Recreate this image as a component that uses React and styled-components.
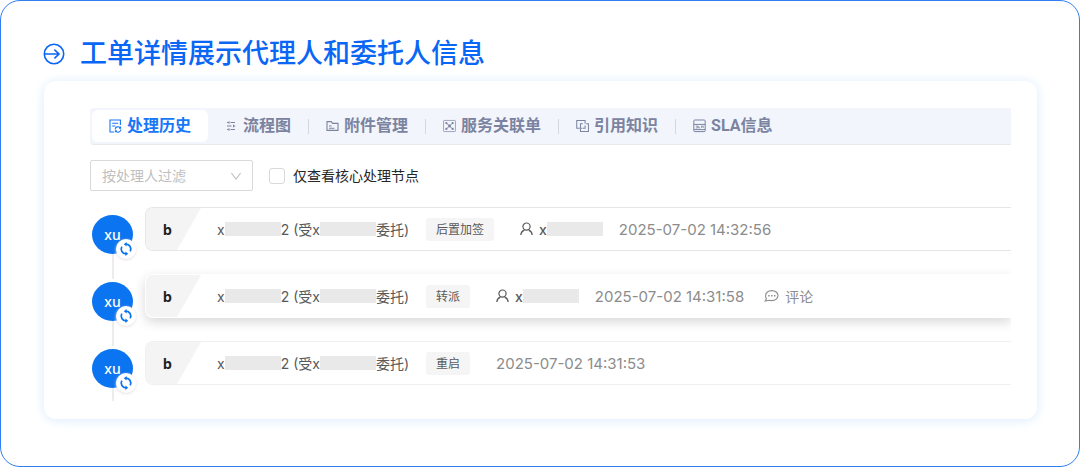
import React, { useState } from 'react';
import styled, { createGlobalStyle } from 'styled-components';

const tabs = [
    { key: "history", label: "处理历史", icon: HistoryIcon },
    { key: "flow", label: "流程图", icon: FlowIcon },
    { key: "files", label: "附件管理", icon: FolderIcon },
    { key: "service", label: "服务关联单", icon: RelationIcon },
    { key: "quote", label: "引用知识", icon: QuoteIcon },
    { key: "sla", label: "SLA信息", icon: SlaIcon },
]

const records = [
    { id: 1, action: "后置加签", hasTarget: true, time: "2025-07-02 14:32:56" },
    { id: 2, action: "转派", hasTarget: true, time: "2025-07-02 14:31:58", active: true },
    { id: 3, action: "重启", time: "2025-07-02 14:31:53" },
]

const App = () => {
    const [current, setCurrent] = useState("history")
    const [coreOnly, setCoreOnly] = useState(false)

    return (
        <Frame>
            <GlobalStyle />
            <Header>
                <ArrowIcon />
                <h1>工单详情展示代理人和委托人信息</h1>
            </Header>

            <Panel>
                <Tabs>
                    {tabs.map(({ key, label, icon: Icon }) => (
                        <Tab key={key} $active={key === current} onClick={() => setCurrent(key)}>
                            <Icon />
                            {label}
                        </Tab>
                    ))}
                </Tabs>

                <Toolbar>
                    <SelectBox>
                        <select aria-label="按处理人过滤" defaultValue="">
                            <option value="">按处理人过滤</option>
                        </select>
                        <ChevronIcon />
                    </SelectBox>
                    <CheckLabel>
                        <input type="checkbox" checked={coreOnly} onChange={(e) => setCoreOnly(e.target.checked)} />
                        仅查看核心处理节点
                    </CheckLabel>
                </Toolbar>

                <Timeline>
                    {records.map((record) => (
                        <Record key={record.id}>
                            <Rail>
                                <Avatar>
                                    xu
                                    <Badge><SyncIcon /></Badge>
                                </Avatar>
                                <Line />
                            </Rail>
                            <Card $active={record.active}>
                                <Node>b</Node>
                                <Person>x<Mask />2 (受x<Mask />委托)</Person>
                                <Tag>{record.action}</Tag>
                                {record.hasTarget && (
                                    <Target><UserIcon />x<Mask /></Target>
                                )}
                                <Time $near={record.hasTarget}>{record.time}</Time>
                                {record.active && (
                                    <Comment><CommentIcon />评论</Comment>
                                )}
                            </Card>
                        </Record>
                    ))}
                </Timeline>
            </Panel>
        </Frame>
    );
}

export default App;

function ArrowIcon() {
    return (
        <svg width="22" height="22" viewBox="0 0 22 22" fill="none" stroke="currentColor" strokeWidth="1.6">
            <circle cx="11" cy="11" r="9.7" />
            <path d="M1.5 11H16M11.4 6.6L16 11l-4.6 4.4" />
        </svg>
    )
}

function HistoryIcon() {
    return (
        <svg width="13" height="14" viewBox="0 0 13 14" fill="none" stroke="currentColor" strokeWidth="1.1">
            <path d="M5 13H1V1h10.4v5M3.2 4.2h6M3.2 7h3.2" />
            <path d="M6.2 10.4a2.7 2.7 0 0 1 4.9-1.5M11.8 10.4a2.7 2.7 0 0 1-4.9 1.7M11.6 7.6v1.6h-1.5M6.4 13.2v-1.5h1.4" />
        </svg>
    )
}

function FlowIcon() {
    return (
        <svg width="13" height="14" viewBox="0 0 13 14" fill="none" stroke="currentColor" strokeWidth="1">
            <path d="M2 3.5h1.6M5.5 3.5H10M2 7h4.5M8.5 7h1.8M2 10.5h1.6M5.5 10.5H10" />
            <path d="M4 2.2v2.6M8.5 5.7v2.6M4 9.2v2.6" />
        </svg>
    )
}

function FolderIcon() {
    return (
        <svg width="13" height="14" viewBox="0 0 13 14" fill="none" stroke="currentColor" strokeWidth="1.1">
            <path d="M1 2.6h4.2l1.4 1.8H12v7H1zM3 7h2.6M3 9.2h5.4" />
        </svg>
    )
}

function RelationIcon() {
    return (
        <svg width="14" height="14" viewBox="0 0 14 14" fill="none" stroke="currentColor" strokeWidth="1">
            <rect x=".6" y="1" width="12.8" height="12" rx=".8" opacity=".75" />
            <path d="M3.6 3.8l6.8 6.4M10.4 3.8l-6.8 6.4" />
            <g fill="currentColor" stroke="none">
                <circle cx="3.6" cy="3.8" r="1.2" />
                <circle cx="10.4" cy="3.8" r="1.2" />
                <circle cx="3.6" cy="10.2" r="1.2" />
                <circle cx="10.4" cy="10.2" r="1.2" />
                <circle cx="7" cy="7" r="1.5" />
            </g>
        </svg>
    )
}

function QuoteIcon() {
    return (
        <svg width="14" height="14" viewBox="0 0 14 14" fill="none" stroke="currentColor" strokeWidth="1.1">
            <path d="M4 9.4H.8V1h9v3.6M4.8 10v3h8.6V4.6H11" />
            <path d="M7.4 4.6H4.8v4.8h2M7.4 9.4h2.4v-3" />
        </svg>
    )
}

function SlaIcon() {
    return (
        <svg width="13" height="14" viewBox="0 0 13 14" fill="none" stroke="currentColor" strokeWidth="1">
            <rect x=".8" y="1" width="11.4" height="11.6" rx="1" />
            <path d="M.8 5.4h11.4M.8 10.6h11.4" />
            <path d="M2.8 7h1.6v2H2.8M5.8 6.8v2.2h1.4M8.6 9V7h1.6v2" strokeWidth=".8" />
        </svg>
    )
}

function ChevronIcon() {
    return (
        <svg width="12" height="12" viewBox="0 0 12 12" fill="none" stroke="#bfbfbf" strokeWidth="1.1">
            <path d="M1.4 3l4.6 6 4.6-6" />
        </svg>
    )
}

function SyncIcon() {
    return (
        <svg width="14" height="14" viewBox="0 0 14 14" fill="none" stroke="#0b74f0" strokeWidth="1.7">
            <path d="M7 2.2A4.8 4.8 0 0 1 11.2 9.300M7 11.800A4.800 4.800 0 0 1 2.800 4.700" />
            <path d="M7.600 0v4.400L4.800 2.200zM6.400 14V9.600l2.800 2.200z" fill="#0b74f0" stroke="none" />
        </svg>
    )
}

function UserIcon() {
    return (
        <svg width="13" height="14" viewBox="0 0 13 14" fill="none" stroke="currentColor" strokeWidth="1.2">
            <circle cx="6.5" cy="4.6" r="3.6" />
            <path d="M.8 13c.2-2.6 1.7-4.2 3.5-4.9M12.2 13c-.2-2.6-1.7-4.2-3.5-4.9" />
        </svg>
    )
}

function CommentIcon() {
    return (
        <svg width="15" height="14" viewBox="0 0 15 14" fill="none" stroke="currentColor" strokeWidth="1.1">
            <path d="M7.8 1.6c3.6 0 6.2 2.2 6.2 5s-2.6 5-6.2 5c-1 0-1.9-.1-2.7-.4L1.2 12l1.2-2.2A4.5 4.5 0 0 1 1.6 6.6c0-2.8 2.6-5 6.2-5z" />
            <path d="M4.2 6.7h1.4M7.1 6.7h1.4M10 6.7h1.4" strokeWidth="1.4" />
        </svg>
    )
}

const GlobalStyle = createGlobalStyle`
    * {
        box-sizing: border-box;
    }

    body {
        margin: 0;
        background-color: #fff;
        font-family: Inter, "Noto Sans CJK SC", sans-serif;
        font-size: 14px;
    }

    svg {
        display: block;
        flex: none;
    }
`;

const Frame = styled.main`
    padding: 35px 42px 47px;
    border: 1px solid #2f7ff2;
    border-radius: 20px;
    padding-left: 43px;
`;

const Header = styled.header`
    display: flex;
    align-items: center;
    gap: 15px;
    margin-bottom: 9px;
    color: #0a66f5;

    svg {
        margin-left: -1px;
    }

    h1 {
        margin: 0;
        font-size: 27px;
        font-weight: 500;
        line-height: 36px;
    }
`;

const Panel = styled.section`
    padding: 27px 26px 23px 46px;
    border-radius: 12px;
    background-color: #fff;
    box-shadow: 0 1px 12px #d9ebfd;
`;

const Tabs = styled.nav`
    display: flex;
    padding: 2px;
    border-bottom: 1px solid #e8e9ec;
    border-radius: 4px 0 0 4px;
    background-color: #f2f5fb;
`;

const Tab = styled.button`
    display: flex;
    align-items: center;
    gap: 5px;
    height: 32px;
    padding: 0 17px;
    border: none;
    border-radius: 6px;
    background-color: ${({ $active }) => $active ? "#fff" : "transparent"};
    color: ${({ $active }) => $active ? "#1677f7" : "#7b83a0"};
    font-family: Roboto, "Noto Sans CJK SC", sans-serif;
    font-size: 16px;
    font-weight: 700;
    line-height: 24px;
    white-space: nowrap;
    cursor: pointer;

    svg {
        width: 13px;
    }

    & + &:not(:nth-child(2))::before {
        content: "";
        width: 1px;
        height: 15px;
        margin-left: -17px;
        margin-right: 12px;
        background-color: #d5d8df;
    }
`;

const Toolbar = styled.div`
    display: flex;
    align-items: center;
    gap: 16px;
    margin: 15px 0 16px;
`;

const SelectBox = styled.div`
    display: grid;
    align-items: center;
    width: 163px;

    select {
        grid-area: 1 / 1;
        height: 31px;
        padding: 0 11px;
        border: 1px solid #d9d9d9;
        border-radius: 2px;
        background-color: #fff;
        color: #bfbfbf;
        font: inherit;
        appearance: none;
    }

    svg {
        grid-area: 1 / 1;
        justify-self: end;
        margin-right: 11px;
        pointer-events: none;
    }
`;

const CheckLabel = styled.label`
    display: flex;
    align-items: center;
    gap: 8px;
    color: #262626;
    line-height: 20px;

    input {
        width: 16px;
        height: 16px;
        margin: 0;
        border: 1px solid #d9d9d9;
        border-radius: 3px;
        background-color: #fff;
        appearance: none;

        &:checked {
            border-color: #1677f7;
            background-color: #1677f7;
        }
    }
`;

const Timeline = styled.ul`
    margin: 0;
    padding: 0;
    list-style: none;
`;

const Record = styled.li`
    display: flex;
    padding-bottom: 23px;

    &:last-child {
        padding-bottom: 11px;
    }
`;

const Rail = styled.div`
    display: flex;
    flex-direction: column;
    align-items: center;
    flex: none;
    width: 41px;
    margin: 8px 12px -28px 2px;

    ${Record}:last-child & {
        margin-bottom: -16px;
    }
`;

const Avatar = styled.div`
    position: relative;
    display: flex;
    align-items: center;
    justify-content: center;
    width: 41px;
    height: 39px;
    border-radius: 50%;
    background-color: #0b74f0;
    color: #fff;
    font-family: "Noto Sans", sans-serif;
    font-weight: 500;
`;

const Badge = styled.span`
    position: absolute;
    right: -3px;
    bottom: -5px;
    display: flex;
    align-items: center;
    justify-content: center;
    width: 20px;
    height: 20px;
    border-radius: 50%;
    background-color: #fff;
    box-shadow: 0 1px 3px #eadfe0;
`;

const Line = styled.div`
    flex: 1;
    width: 2px;
    background-color: #ececec;
`;

const Card = styled.article`
    display: flex;
    align-items: center;
    flex: 1;
    height: 44px;
    border: 1px solid ${({ $active }) => $active ? "#fff" : "#e6e6e6"};
    border-right: none;
    border-radius: 8px 0 0 8px;
    background-color: #fff;
    box-shadow: ${({ $active }) => $active ? "0 4px 12px #00000028" : "none"};
    clip-path: inset(-20px 0 -20px -20px);
    color: #595959;
    white-space: nowrap;

    ${Record}:last-child & {
        border-color: #f0f0f0;
    }
`;

const Node = styled.strong`
    align-self: stretch;
    display: flex;
    align-items: center;
    width: 55px;
    margin-right: 16px;
    padding-left: 17px;
    border-radius: 7px 0 0 7px;
    background-color: #f4f4f4;
    clip-path: polygon(0 0, 100% 0, 31px 100%, 0 100%);
    color: #1f1f1f;
`;

const Person = styled.span`
    display: flex;
    align-items: center;
    white-space: pre;
`;

const Mask = styled.i`
    width: 56px;
    height: 14px;
    background-color: #e9e9e9;
`;

const Tag = styled.span`
    margin-left: 17px;
    padding: 0 10px;
    border-radius: 3px;
    background-color: #f5f5f5;
    font-size: 12px;
    line-height: 23px;
`;

const Target = styled.span`
    display: flex;
    align-items: center;
    margin-left: 26px;
    font-weight: 500;

    svg {
        margin-right: 6px;
    }
`;

const Time = styled.time`
    margin-left: ${({ $near }) => $near ? "16px" : "26px"};
    color: #8c8c8c;
    font-size: 15px;
`;

const Comment = styled.button`
    display: flex;
    align-items: center;
    gap: 6px;
    margin-left: 20px;
    padding: 0;
    border: none;
    background: none;
    color: #8c8c8c;
    font: inherit;
    cursor: pointer;
`;
